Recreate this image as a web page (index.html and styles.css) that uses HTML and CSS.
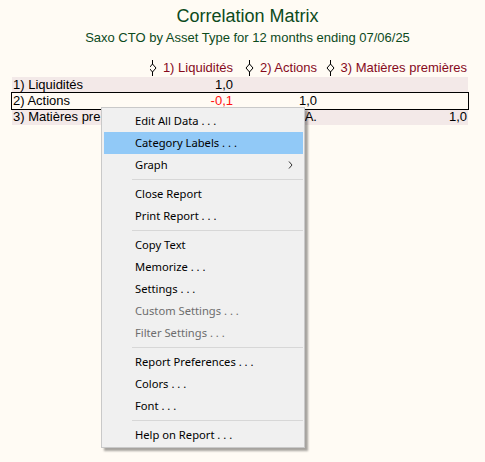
FILE: index.html
```html
<!DOCTYPE html>
<html lang="fr">
<head>
<meta charset="utf-8">
<title>Correlation Matrix</title>
<link rel="stylesheet" href="styles.css">
</head>
<body>
<div class="report">
  <header class="report-head">
    <h1 class="title">Correlation Matrix</h1>
    <p class="subtitle">Saxo CTO by Asset Type for 12 months ending 07/06/25</p>
  </header>
  <div class="matrix">
    <div class="row head">
      <div class="cell"></div>
      <div class="cell hcell"><svg class="dia" viewBox="0 0 9 16" width="9" height="16"><line x1="4.5" y1="0" x2="4.5" y2="16"/><polygon points="4.5,4 8,8 4.5,12 1,8"/></svg><span>1) Liquidités</span></div>
      <div class="cell hcell"><svg class="dia" viewBox="0 0 9 16" width="9" height="16"><line x1="4.5" y1="0" x2="4.5" y2="16"/><polygon points="4.5,4 8,8 4.5,12 1,8"/></svg><span>2) Actions</span></div>
      <div class="cell hcell"><svg class="dia" viewBox="0 0 9 16" width="9" height="16"><line x1="4.5" y1="0" x2="4.5" y2="16"/><polygon points="4.5,4 8,8 4.5,12 1,8"/></svg><span>3) Matières premières</span></div>
    </div>
    <div class="row shaded">
      <div class="cell label">1) Liquidités</div>
      <div class="cell num">1,0</div>
      <div class="cell num"></div>
      <div class="cell num"></div>
    </div>
    <div class="row selected">
      <div class="cell label">2) Actions</div>
      <div class="cell num neg">-0,1</div>
      <div class="cell num">1,0</div>
      <div class="cell num"></div>
    </div>
    <div class="row shaded">
      <div class="cell label clip">3) Matières pre</div>
      <div class="cell num"></div>
      <div class="cell num">N.A.</div>
      <div class="cell num">1,0</div>
    </div>
  </div>
</div>

<div class="menu">
  <div class="item">Edit All Data . . .</div>
  <div class="item active">Category Labels . . .</div>
  <div class="item sub">Graph<svg class="chev" viewBox="0 0 5 8" width="5" height="8"><polyline points="1,0.5 4,4 1,7.5"/></svg></div>
  <div class="sep"></div>
  <div class="item">Close Report</div>
  <div class="item">Print Report . . .</div>
  <div class="sep"></div>
  <div class="item">Copy Text</div>
  <div class="item">Memorize . . .</div>
  <div class="item">Settings . . .</div>
  <div class="item disabled">Custom Settings . . .</div>
  <div class="item disabled">Filter Settings . . .</div>
  <div class="sep"></div>
  <div class="item">Report Preferences . . .</div>
  <div class="item">Colors . . .</div>
  <div class="item">Font . . .</div>
  <div class="sep"></div>
  <div class="item">Help on Report . . .</div>
</div>
</body>
</html>
```

FILE: styles.css
```css
html, body {
  margin: 0;
  padding: 0;
}

body {
  background: #fffbf4;
  font-family: "Liberation Sans", Arial, sans-serif;
  width: 485px;
  height: 462px;
  overflow: hidden;
}

.report-head {
  padding: 5px 0 0 10px;
  text-align: center;
  color: #0c4a1c;
}

.title {
  margin: 0;
  font-size: 18px;
  line-height: 22px;
  font-weight: normal;
}

.subtitle {
  margin: 3px 0 0;
  font-size: 13px;
  line-height: 16px;
}

.matrix {
  margin: 14px 0 0 12px;
  width: 456px;
}

.row {
  display: grid;
  grid-template-columns: 138px 84px 84px 150px;
  height: 16px;
  font-size: 13px;
  line-height: 16px;
  color: #000;
}

.row.head {
  margin-bottom: 1px;
  color: #860a1c;
}

.row.shaded {
  background: #f3e9e8;
}

.row.selected {
  outline: 1px solid #000;
}

.cell {
  white-space: nowrap;
  overflow: hidden;
}

.cell.label {
  padding-left: 1px;
}

.cell.num {
  text-align: right;
  padding-right: 1px;
}

.cell.neg {
  color: #ff1010;
}

.hcell {
  display: flex;
  justify-content: flex-end;
  align-items: center;
  gap: 6px;
  padding-right: 1px;
}

.dia {
  flex: none;
  display: block;
}

.dia line {
  stroke: #000;
  stroke-width: 1;
}

.dia polygon {
  fill: #fffbf4;
  stroke: #000;
  stroke-width: 1;
}

/* context menu overlay */
.menu {
  position: absolute;
  left: 101px;
  top: 107px;
  width: 204px;
  box-sizing: border-box;
  background: #f0f0f0;
  border: 1px solid #c9c9c9;
  padding: 2px 1px 1px 2px;
  box-shadow: 3px 3px 2px rgba(0, 0, 0, 0.35);
  font-family: "Noto Sans", "Open Sans", sans-serif;
  font-size: 11.2px;
  color: #000;
}

.item {
  height: 22px;
  line-height: 22px;
  padding-left: 31px;
  display: flex;
  align-items: center;
  white-space: nowrap;
}

.item.active {
  background: #91c9f7;
}

.item.disabled {
  color: #6d6d6d;
}

.item.sub {
  justify-content: space-between;
  padding-right: 10px;
}

.chev {
  display: block;
}

.chev polyline {
  fill: none;
  stroke: #333;
  stroke-width: 1;
}

.sep {
  height: 1px;
  background: #d7d7d7;
  margin: 3px 0 3px 28px;
}
```
